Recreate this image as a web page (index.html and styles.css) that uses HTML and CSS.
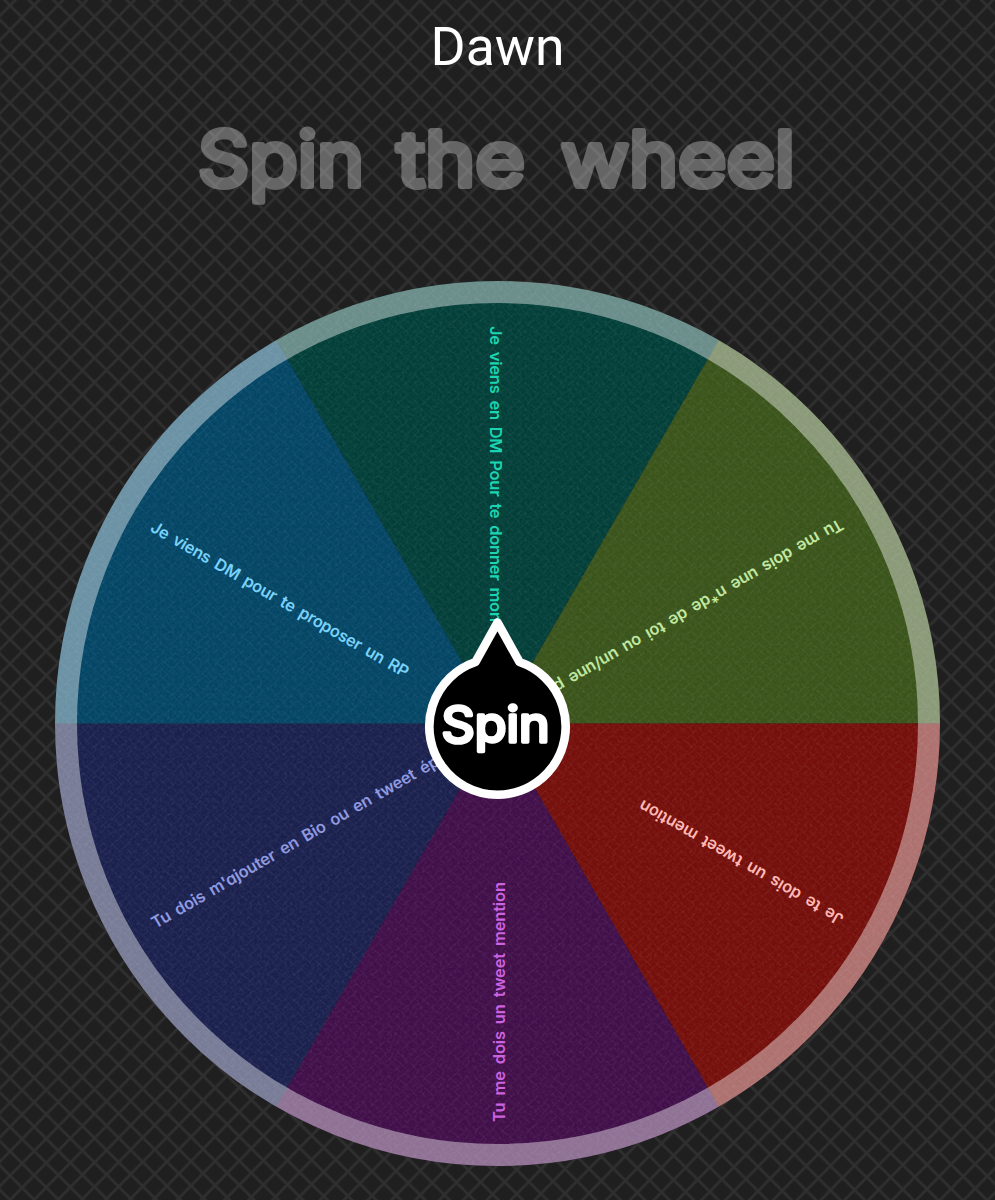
FILE: index.html
```
<!DOCTYPE html>
<html lang="fr">
<head>
    <meta charset="UTF-8">
    <meta name="viewport" content="width=device-width, initial-scale=1.0">
    <title>Spin the wheel</title>
    <link rel="stylesheet" href="styles.css">
</head>
<body>

    <svg class="backdrop" width="995" height="1200">
        <defs>
            <pattern id="lattice" width="24" height="24" patternUnits="userSpaceOnUse" patternTransform="matrix(1.0054 -0.0121 0 1.0158 58.3 29.3)">
                <path class="lattice-line" d="M-2 -2L26 26M-2 26L26 -2M-2 2L2 -2M22 26L26 22M-2 22L2 26M22 -2L26 2"/>
            </pattern>
        </defs>
        <rect width="995" height="1200" fill="url(#lattice)"/>
    </svg>

    <main class="container">
        <h1 class="name">Dawn</h1>

        <svg class="title" viewBox="0 95 995 145">
            <g class="title-text">
                <text x="198" y="186" textLength="166" lengthAdjust="spacingAndGlyphs">Spin</text>
                <text x="397" y="186" textLength="128" lengthAdjust="spacingAndGlyphs">the</text>
                <text x="561" y="186" textLength="234" lengthAdjust="spacingAndGlyphs">wheel</text>
            </g>
        </svg>

        <svg class="wheel" viewBox="0 240 995 960">
            <defs>
                <pattern id="weave" width="26" height="26" patternUnits="userSpaceOnUse">
                    <path class="weave-line" d="M0 3l7 7M5 0l9 9M16 1l8 8M1 13l8 8M12 12l6 6M19 13l7 7M8 19l7 7M20 22l4 4M0 22l4 4M11 3l4 -3M1 9l5 -5M9 14l8 -8M20 5l5 -5M3 19l7 -7M15 22l8 -8M22 13l4 -4M10 26l5 -5M0 26l3 -3M19 26l6 -6"/>
                </pattern>
                <filter id="grain" x="0" y="0" width="100%" height="100%">
                    <feTurbulence type="fractalNoise" baseFrequency="0.4" numOctaves="2"/>
                    <feColorMatrix values="0 0 0 0 1  0 0 0 0 1  0 0 0 0 1  0.5 0 0 0 -0.17"/>
                    <feComposite in2="SourceGraphic" operator="in"/>
                </filter>
            </defs>

            <g transform="translate(497.5 723.5)">
                <path class="slice teal" d="M0 0L-221.25 -383.2A442.5 442.5 0 0 1 221.25 -383.2Z"/>
                <path class="slice green" d="M0 0L221.25 -383.2A442.5 442.5 0 0 1 442.5 0Z"/>
                <path class="slice red" d="M0 0L442.5 0A442.5 442.5 0 0 1 221.25 383.2Z"/>
                <path class="slice purple" d="M0 0L221.25 383.2A442.5 442.5 0 0 1 -221.25 383.2Z"/>
                <path class="slice navy" d="M0 0L-221.25 383.2A442.5 442.5 0 0 1 -442.5 0Z"/>
                <path class="slice blue" d="M0 0L-442.5 0A442.5 442.5 0 0 1 -221.25 -383.2Z"/>
                <circle r="442.5" fill="url(#weave)"/>
                <circle r="442.5" filter="url(#grain)" opacity="0.2"/>
                <circle class="rim" r="431.5"/>

                <g class="labels">
                    <text class="label-blue" transform="rotate(30)" x="-398" y="7" textLength="295">Je viens DM pour te proposer un RP</text>
                    <text class="label-teal" transform="rotate(90)" x="-397.5" y="8" textLength="296">Je viens en DM Pour te donner mon</text>
                    <text class="label-green" transform="rotate(150)" x="-398.5" y="7" textLength="331">Tu me dois une n*de de toi ou un/une p</text>
                    <text class="label-red" transform="rotate(210)" x="-397" y="7" textLength="233">Je te dois un tweet mention</text>
                    <text class="label-purple" transform="rotate(270)" x="-398.5" y="7.5" textLength="240">Tu me dois un tweet mention</text>
                    <text class="label-navy" transform="rotate(330)" x="-399" y="7" textLength="329">Tu dois m'ajouter en Bio ou en tweet ép</text>
                </g>
            </g>

            <path class="hub" d="M475.5 662L497.5 622.5L519.5 662A68.2 68.2 0 1 1 475.5 662Z"/>
            <text class="hub-text" x="441.5" y="742" textLength="108" lengthAdjust="spacingAndGlyphs">Spin</text>
        </svg>
    </main>

</body>
</html>
```
FILE: styles.css
```
body {
    margin: 0;
    background: #1f1f1f;
    color: white;
    font-family: Inter, "Liberation Sans", sans-serif;
}
.backdrop {
    position: absolute;
    top: 0;
    left: 0;
    z-index: -1;
}
.lattice-line {
    fill: none;
    stroke: #2f2f2f;
    stroke-width: 2.7;
}
.container {
    display: flex;
    flex-direction: column;
    width: 995px;
    height: 1200px;
    overflow: hidden;
}
.name {
    margin: 0;
    height: 95px;
    line-height: 94px;
    text-align: center;
    font-family: Roboto, sans-serif;
    font-size: 53.5px;
    font-weight: 400;
}
.title {
    height: 145px;
}
.title-text {
    fill: white;
    stroke: white;
    stroke-width: 6;
    stroke-linejoin: round;
    font-size: 76px;
    font-weight: 400;
    opacity: 0.31;
}
.wheel {
    height: 960px;
}
.weave-line {
    fill: none;
    stroke: rgba(255, 255, 255, 0.06);
    stroke-width: 1;
}
.rim {
    fill: none;
    stroke: white;
    stroke-width: 22;
    opacity: 0.41;
}
.teal { fill: #023e38; }
.green { fill: #39531a; }
.red { fill: #740e0a; }
.purple { fill: #400e49; }
.navy { fill: #1a204d; }
.blue { fill: #034565; }

.labels {
    font-size: 16.5px;
    font-weight: 600;
    word-spacing: 3px;
    font-feature-settings: "cv11";
}
.label-blue { fill: #78d2fa; }
.label-teal { fill: #1bd5b2; }
.label-green { fill: #c0e8a0; }
.label-red { fill: #ffb9b4; }
.label-purple { fill: #cd62e0; }
.label-navy { fill: #8f9ae0; }

.hub {
    fill: black;
    stroke: white;
    stroke-width: 8.7;
    stroke-linejoin: round;
}
.hub-text {
    fill: white;
    stroke: white;
    stroke-width: 3.6;
    stroke-linejoin: round;
    font-size: 49px;
    font-weight: 400;
}
```
